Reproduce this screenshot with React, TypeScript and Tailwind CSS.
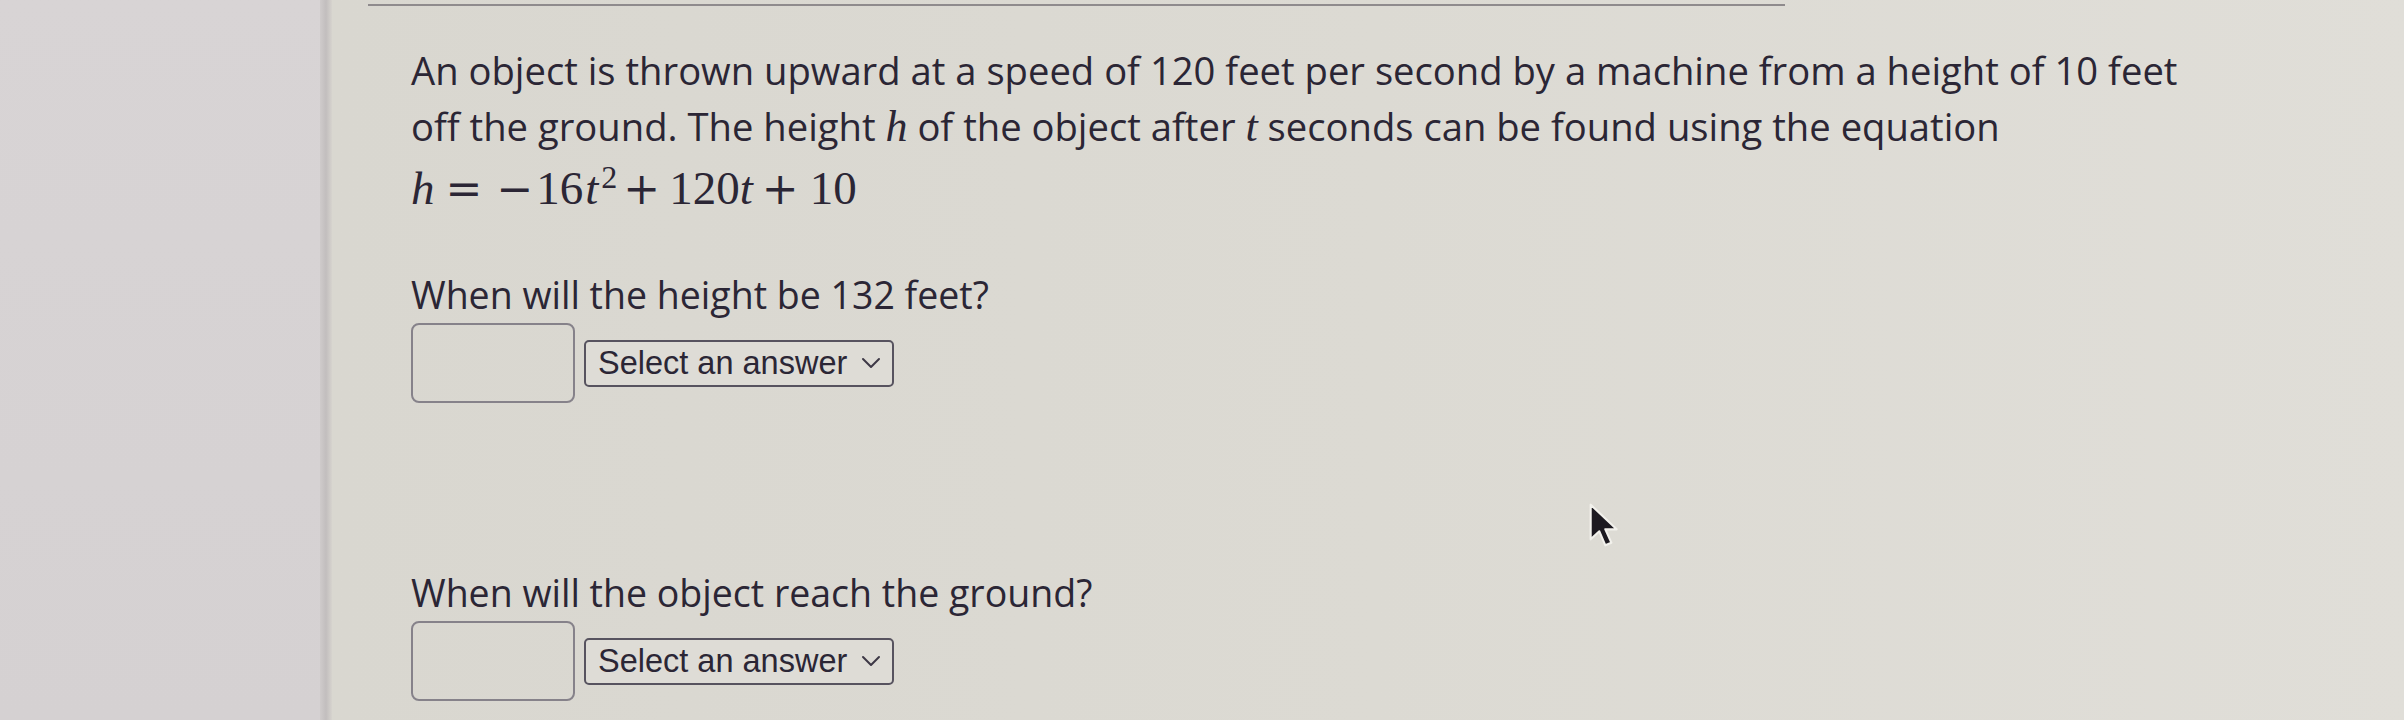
import React from 'react';

function MathVar({ children }: { children: React.ReactNode }) {
  return (
    <span className="font-['Liberation_Serif',serif] italic text-[44px]">{children}</span>
  );
}

function Op({ children, className }: { children: React.ReactNode; className: string }) {
  return <span className={`font-['DejaVu_Serif',serif] text-[44px] ${className}`}>{children}</span>;
}

function AnswerRow() {
  return (
    <div className="flex h-[80px] items-center gap-[9px]">
      <div className="h-[80px] w-[164px] rounded-[8px] border-2 border-[#86828a]" />
      <div className="flex h-[47px] w-[310px] items-center justify-between rounded-[5px] border-2 border-[#57535f] bg-[#dedcd6] pl-[12px] pr-[11px] font-['Liberation_Sans',Arial,sans-serif] text-[32.5px] leading-none text-[#2b2635]">
        <span>Select an answer</span>
        <svg width="20" height="12" viewBox="0 0 20 12" fill="none">
          <path d="M2 2 L10 10 L18 2" stroke="#3d3846" strokeWidth="2" strokeLinecap="round" strokeLinejoin="round" />
        </svg>
      </div>
    </div>
  );
}

function Cursor() {
  return (
    <svg className="absolute left-[1588px] top-[502px]" width="32" height="48" viewBox="0 0 24 36">
      <path
        d="M2 2 L2 28 L8.5 22 L13 32.5 L17.5 30.5 L13 20.5 L21.5 20.5 Z"
        fill="#1c1920"
        stroke="#f2f1ec"
        strokeWidth="1.6"
        strokeLinejoin="round"
      />
    </svg>
  );
}

export default function App() {
  return (
    <div className="relative flex h-[720px] w-[2404px] overflow-hidden bg-[#dbd9d2] font-['Open_Sans',sans-serif]">
      {/* left sidebar */}
      <div className="w-[320px] shrink-0 bg-gradient-to-b from-[#d8d4d5] to-[#d5d1d2]" />
      <div className="w-[12px] shrink-0 bg-gradient-to-r from-[#cfcbcb] via-[#c2bebe] to-[#d6d3ce]" />

      <main className="flex-1 bg-gradient-to-r from-[#d9d7d0] via-[#dcdad3] to-[#e0ded8] pl-[36px]">
        <div className="mt-[4px] h-[2px] w-[1417px] bg-[#8f8b8d]" />

        <div className="whitespace-nowrap pl-[43px] pt-[36px] text-[37.5px] leading-[56px] text-[#2b2635]">
          <p className="text-[38.2px]">
            An object is thrown upward at a speed of 120 feet per second by a machine from a height of 10 feet
            <br />
            off the ground. The height <MathVar>h</MathVar> of the object after <MathVar>t</MathVar> seconds can be found using the equation
          </p>

          {/* equation */}
          <div className="flex h-[66px] items-baseline pt-[6px] font-['Liberation_Serif',serif] text-[47px] leading-[54px]">
            <span className="italic">h</span>
            <Op className="ml-[11px]">=</Op>
            <Op className="ml-[14px]">−</Op>
            <span className="ml-[3px]">16</span>
            <span className="ml-[2px] italic">t</span>
            <sup className="ml-[3px] text-[32px]">2</sup>
            <Op className="ml-[6px]">+</Op>
            <span className="ml-[9px]">120</span>
            <span className="italic">t</span>
            <Op className="ml-[9px]">+</Op>
            <span className="ml-[11px]">10</span>
          </div>

          <p className="mt-[46px]">When will the height be 132 feet?</p>
          <AnswerRow />

          <p className="mt-[162px]">When will the object reach the ground?</p>
          <AnswerRow />
        </div>
      </main>

      <Cursor />
    </div>
  );
}
